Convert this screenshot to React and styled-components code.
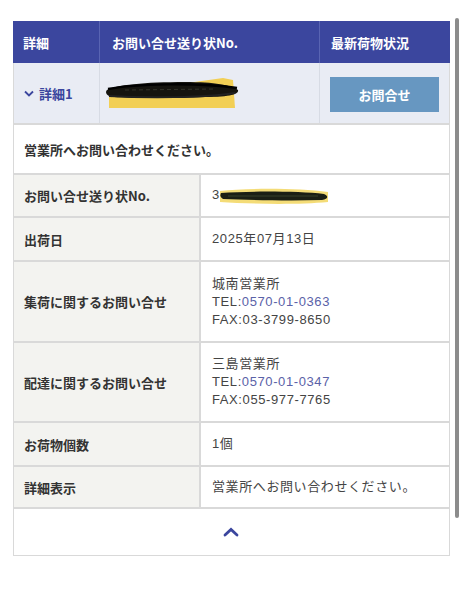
import React from "react";
import styled, { createGlobalStyle } from "styled-components";

const Global = createGlobalStyle`
  html, body {
    margin: 0;
    padding: 0;
    background: #ffffff;
  }
  body {
    font-family: "Noto Sans CJK JP", "Noto Sans", sans-serif;
    color: #333333;
  }
`;

const Page = styled.div`
  position: relative;
  width: 463px;
  height: 600px;
  padding: 21px 0 0 13px;
  box-sizing: border-box;
`;

const ScrollThumb = styled.div`
  position: absolute;
  left: 455px;
  top: 18px;
  width: 4px;
  height: 500px;
  border-radius: 2px;
  background: #8c8c8c;
`;

const Card = styled.div`
  width: 437px;
  border: 1px solid #d9d9d9;
  border-top: none;
  box-sizing: border-box;
`;

const HeadRow = styled.div`
  display: grid;
  grid-template-columns: 86px 220px 1fr;
  height: 42px;
  background: #3b469e;
  color: #ffffff;
  font-size: 13px;
  font-weight: 700;
  margin: 0 -1px;
`;

const HeadCell = styled.div`
  display: flex;
  align-items: center;
  padding-left: ${(p) => p.$pad || 10}px;
  border-left: ${(p) => (p.$first ? "none" : "1px solid #5964b3")};
`;

const SummaryRow = styled.div`
  display: grid;
  grid-template-columns: 85px 220px 1fr;
  height: 62px;
  background: #e9ecf4;
  border-bottom: 2px solid #d9d9d9;
  box-sizing: border-box;
`;

const SummaryCell = styled.div`
  display: flex;
  align-items: center;
  justify-content: ${(p) => (p.$center ? "center" : "flex-start")};
  padding-left: ${(p) => (p.$center ? 0 : p.$pad || 10)}px;
  border-left: ${(p) => (p.$first ? "none" : "1px solid #d7dbe4")};
`;

const Toggle = styled.span`
  display: flex;
  align-items: center;
  gap: 5px;
  color: #3b469e;
  font-size: 13px;
  font-weight: 700;
`;

const InquiryButton = styled.button`
  width: 109px;
  height: 35px;
  border: none;
  background: #6797c1;
  color: #ffffff;
  font-family: inherit;
  font-size: 13px;
  font-weight: 700;
  margin-top: 2px;
`;

const Notice = styled.div`
  height: 48px;
  display: flex;
  align-items: center;
  padding-left: 10px;
  font-size: 13px;
  font-weight: 700;
  border-bottom: 2px solid #d9d9d9;
`;

const DetailRow = styled.div`
  display: grid;
  grid-template-columns: 187px 1fr;
  height: ${(p) => p.$h}px;
  border-bottom: 2px solid #d9d9d9;
  box-sizing: border-box;
  font-size: 13px;
`;

const Label = styled.div`
  display: flex;
  align-items: center;
  padding-left: 10px;
  background: #f3f3f0;
  border-right: 2px solid #d9d9d9;
  font-weight: 700;
`;

const Value = styled.div`
  display: flex;
  flex-direction: column;
  justify-content: center;
  padding-left: 11px;
  line-height: 18px;
  color: #444444;
  font-family: "Liberation Sans", "Noto Sans CJK JP", sans-serif;
  letter-spacing: 0.6px;
`;

const Phone = styled.span`
  color: #5a62a8;
`;

const Redacted = styled.span`
  position: relative;
  display: inline-block;
  vertical-align: middle;
  width: ${(p) => p.$w}px;
  height: ${(p) => p.$h || 20}px;
`;

const Mark = styled.svg`
  position: absolute;
  left: ${(p) => p.$left || 0}px;
  top: ${(p) => p.$top || 0}px;
`;

const Footer = styled.div`
  height: 46px;
  display: flex;
  align-items: center;
  justify-content: center;
  padding-right: 2px;
`;

function Scribble() {
  return (
    <Mark $top={0} width="136" height="34" viewBox="0 0 136 34">
      <path d="M4 18 L118 2 L128 4 L130 32 L4 32 Z" fill="#f2cf55" />
      <path
        d="M2 14 C10 9 40 6 80 6 C110 6 126 9 133 14 C134 18 126 21 100 21 C60 22 20 22 6 21 C1 19 0 16 2 14 Z"
        fill="#15140f"
      />
      <path d="M3 13 C30 8 90 6 132 12" stroke="#000" strokeWidth="2.5" fill="none" />
      <path d="M4 20 C40 22 100 22 130 17" stroke="#222" strokeWidth="2" fill="none" />
      <path d="M20 14 L110 13" stroke="#3a3a30" strokeWidth="0.8" fill="none" strokeDasharray="4 3" />
    </Mark>
  );
}

function Scribble2() {
  return (
    <Mark $left={-2} $top={-1} width="114" height="22" viewBox="0 0 114 22">
      <path d="M2 6 C30 3 80 3 110 7 L110 17 C80 20 30 19 2 17 Z" fill="#f3d868" opacity="0.9" />
      <path
        d="M3 8 C30 6 80 6 106 9 C111 11 110 14 104 15 C70 16 30 15 5 14 C2 12 2 10 3 8 Z"
        fill="#1b1f15"
      />
      <path d="M10 11 L100 11" stroke="#3d4a30" strokeWidth="0.8" fill="none" />
    </Mark>
  );
}

export default function App() {
  return (
    <Page>
      <Global />
      <Card>
        <HeadRow>
          <HeadCell $first>詳細</HeadCell>
          <HeadCell $pad={12}>お問い合せ送り状No.</HeadCell>
          <HeadCell $pad={11}>最新荷物状況</HeadCell>
        </HeadRow>
        <SummaryRow>
          <SummaryCell $first>
            <Toggle>
              <svg width="10" height="7" viewBox="0 0 10 7">
                <path d="M1 1.5 L5 5.5 L9 1.5" stroke="#3b469e" strokeWidth="1.8" fill="none" />
              </svg>
              詳細1
            </Toggle>
          </SummaryCell>
          <SummaryCell $pad={5}>
            <Redacted $w={136} $h={34}>
              <Scribble />
            </Redacted>
          </SummaryCell>
          <SummaryCell $center>
            <InquiryButton>お問合せ</InquiryButton>
          </SummaryCell>
        </SummaryRow>
        <Notice>営業所へお問い合わせください。</Notice>
        <DetailRow $h={43}>
          <Label>お問い合せ送り状No.</Label>
          <Value>
            <div>
              3
              <Redacted $w={110}>
                <Scribble2 />
              </Redacted>
            </div>
          </Value>
        </DetailRow>
        <DetailRow $h={44}>
          <Label>出荷日</Label>
          <Value>2025年07月13日</Value>
        </DetailRow>
        <DetailRow $h={81}>
          <Label>集荷に関するお問い合せ</Label>
          <Value>
            <div>城南営業所</div>
            <div>
              TEL:<Phone>0570-01-0363</Phone>
            </div>
            <div>FAX:03-3799-8650</div>
          </Value>
        </DetailRow>
        <DetailRow $h={80}>
          <Label>配達に関するお問い合せ</Label>
          <Value>
            <div>三島営業所</div>
            <div>
              TEL:<Phone>0570-01-0347</Phone>
            </div>
            <div>FAX:055-977-7765</div>
          </Value>
        </DetailRow>
        <DetailRow $h={44}>
          <Label>お荷物個数</Label>
          <Value>1個</Value>
        </DetailRow>
        <DetailRow $h={42}>
          <Label>詳細表示</Label>
          <Value>営業所へお問い合わせください。</Value>
        </DetailRow>
        <Footer>
          <svg width="16" height="10" viewBox="0 0 16 10">
            <path d="M2 8 L8 2.5 L14 8" stroke="#3b469e" strokeWidth="2.8" fill="none" strokeLinecap="round" />
          </svg>
        </Footer>
      </Card>
      <ScrollThumb />
    </Page>
  );
}
